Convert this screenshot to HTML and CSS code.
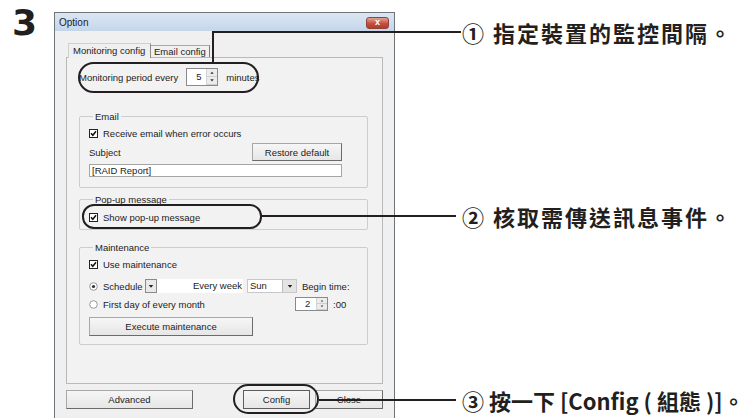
FILE: index.html
```html
<!DOCTYPE html>
<html lang="zh-Hant">

<head>
    <meta charset="UTF-8">
    <meta name="viewport" content="width=device-width, initial-scale=1.0">
    <title>Option</title>

    <link rel="stylesheet" href="styles.css">
</head>

<body>
    <div class="page">
        <div class="step">3</div>

        <div class="dialog">
            <div class="titlebar">
                <span>Option</span>
                <span class="close">x</span>
            </div>

            <div class="client">
                <div class="tabs">
                    <span class="tab active">Monitoring config</span>
                    <span class="tab">Email config</span>
                </div>

                <div class="panel">
                    <div class="row period">
                        <span>Monitoring period every</span>
                        <span class="spin">
                            <span class="val">5</span>
                            <span class="arrows">
                                <svg viewBox="0 0 11 8"><path d="M3.5 5.5h4L5.5 3z" fill="#333"/></svg>
                                <svg viewBox="0 0 11 8"><path d="M3.5 2.5h4L5.5 5z" fill="#333"/></svg>
                            </span>
                        </span>
                        <span>minutes</span>
                    </div>

                    <fieldset class="group email">
                        <legend>Email</legend>
                        <div class="row check">
                            <svg class="box" viewBox="0 0 9 9"><rect x=".5" y=".5" width="8" height="8" fill="#fff" stroke="#222"/><path d="M2 4.3l1.8 2L7 2.3" fill="none" stroke="#111" stroke-width="1.5"/></svg>
                            <span>Receive email when error occurs</span>
                        </div>
                        <div class="row subject">
                            <span>Subject</span>
                            <span class="btn restore">Restore default</span>
                        </div>
                        <div class="textbox">[RAID Report]</div>
                    </fieldset>

                    <fieldset class="group popup">
                        <legend>Pop-up message</legend>
                        <div class="row check">
                            <svg class="box" viewBox="0 0 9 9"><rect x=".5" y=".5" width="8" height="8" fill="#fff" stroke="#222"/><path d="M2 4.3l1.8 2L7 2.3" fill="none" stroke="#111" stroke-width="1.5"/></svg>
                            <span>Show pop-up message</span>
                        </div>
                    </fieldset>

                    <fieldset class="group maint">
                        <legend>Maintenance</legend>
                        <div class="row check">
                            <svg class="box" viewBox="0 0 9 9"><rect x=".5" y=".5" width="8" height="8" fill="#fff" stroke="#222"/><path d="M2 4.3l1.8 2L7 2.3" fill="none" stroke="#111" stroke-width="1.5"/></svg>
                            <span>Use maintenance</span>
                        </div>
                        <div class="row schedule">
                            <svg class="radio" viewBox="0 0 9 9"><circle cx="4.5" cy="4.5" r="3.8" fill="#fff" stroke="#999"/><circle cx="4.5" cy="4.5" r="1.6" fill="#333"/></svg>
                            <span class="lbl-schedule">Schedule</span>
                            <span class="drop">
                                <svg viewBox="0 0 9 9"><path d="M2.5 3.5h4L4.5 6z" fill="#222"/></svg>
                            </span>
                            <span class="every">Every week</span>
                            <span class="combo">
                                <span class="combo-val">Sun</span>
                                <span class="combo-btn"><svg viewBox="0 0 9 9"><path d="M2.5 3.5h4L4.5 6z" fill="#222"/></svg></span>
                            </span>
                            <span class="begin">Begin time:</span>
                        </div>
                        <div class="row month">
                            <svg class="radio" viewBox="0 0 9 9"><circle cx="4.5" cy="4.5" r="3.8" fill="#fff" stroke="#999"/></svg>
                            <span class="grow">First day of every month</span>
                            <span class="spin small">
                                <span class="val">2</span>
                                <span class="arrows">
                                    <svg viewBox="0 0 11 8"><path d="M3.5 5.5h4L5.5 3z" fill="#333"/></svg>
                                    <svg viewBox="0 0 11 8"><path d="M3.5 2.5h4L5.5 5z" fill="#333"/></svg>
                                </span>
                            </span>
                            <span class="mins">:00</span>
                        </div>
                        <span class="btn execute">Execute maintenance</span>
                    </fieldset>
                </div>

                <div class="buttons">
                    <span class="btn advanced">Advanced</span>
                    <div class="btn-group">
                        <span class="btn config">Config</span>
                        <span class="btn closebtn">Close</span>
                    </div>
                </div>
            </div>
        </div>

        <!-- callouts drawn over the screenshot -->
        <div class="oval oval-1"></div>
        <div class="wire wire-1v"></div>
        <div class="wire wire-1h"></div>
        <p class="note note-1">① 指定裝置的監控間隔。</p>

        <div class="oval oval-2"></div>
        <div class="wire wire-2"></div>
        <p class="note note-2">② 核取需傳送訊息事件。</p>

        <div class="oval oval-3"></div>
        <div class="wire wire-3"></div>
        <p class="note note-3">③ 按一下 [Config ( 組態 )]。</p>
    </div>
</body>

</html>
```

FILE: styles.css
```css
* {
    padding: 0;
    margin: 0;
    box-sizing: border-box;
}

body {
    background: #fff;
    font-family: "Liberation Sans", Arial, sans-serif;
    color: #1c1c1c;
    overflow: hidden;
}

.page {
    position: relative;
    width: 754px;
    height: 418px;
    display: flex;
    align-items: flex-start;
}

.step {
    width: 54px;
    padding: 2px 0 0 12px;
    font-family: "DejaVu Sans", sans-serif;
    font-weight: bold;
    font-size: 36px;
    line-height: 42px;
    color: #231f20;
}

/* ---------- dialog ---------- */

.dialog {
    margin-top: 12px;
    width: 341px;
    height: 420px;
    border: 1px solid #6f7478;
    background: #f0f0f0;
    font-size: 9.5px;
    white-space: nowrap;
}

.titlebar {
    height: 18px;
    display: flex;
    justify-content: space-between;
    align-items: center;
    padding: 0 5px 0 4px;
    background: linear-gradient(#dbe6f3, #c5d6ea);
    font-size: 10px;
}

.close {
    width: 23px;
    height: 12px;
    margin-top: 2px;
    border: 1px solid #8c4338;
    border-radius: 3px;
    background: linear-gradient(#e1a496, #c4503f 55%, #b9382a);
    color: #fff;
    font-weight: bold;
    font-size: 9px;
    line-height: 9px;
    text-align: center;
}

.client {
    padding: 12px 11px 0 11px;
}

.tabs {
    display: flex;
    align-items: flex-end;
    padding-left: 2px;
    height: 14px;
}

.tab {
    height: 12px;
    padding: 0 3px;
    border: 1px solid #a9a9a9;
    border-bottom: none;
    line-height: 11px;
    background: #f0f0f0;
}

.tab.active {
    height: 15px;
    width: 83px;
    margin-bottom: -1px;
    padding-left: 4px;
    border-color: #d0d0d0 #8d8d8d #d0d0d0 #d0d0d0;
    line-height: 13px;
    position: relative;
}

.tab+.tab {
    border-left: none;
    border-right-color: #7c7c7c;
}

.panel {
    height: 327px;
    border: 1px solid #b9b9b9;
    background: #f2f2f2;
    padding: 0 14px 0 12px;
}

.row {
    display: flex;
    align-items: center;
}

.row>* {
    flex-shrink: 0;
}

.period {
    margin-top: 10px;
    height: 18px;
    gap: 8px;
}

.spin {
    display: flex;
    width: 32px;
    height: 18px;
    border: 1px solid #8a8a8a;
    background: #fff;
}

.spin .val {
    flex: 1;
    padding-left: 9px;
    line-height: 16px;
}

.arrows {
    width: 11px;
    display: flex;
    flex-direction: column;
    border-left: 1px solid #d4d4d4;
    background: #ececec;
}

.arrows svg {
    flex: 1;
    width: 10px;
    border-bottom: 1px solid #cfcfcf;
}

/* ---------- group boxes ---------- */

.group {
    min-width: 0;
    border: 1px solid #cdcdcd;
    border-radius: 2px;
    padding: 0 25px 0 9px;
}

.group legend {
    margin-left: 4px;
    padding: 0 2px;
    line-height: 11px;
}

.check {
    height: 12px;
    gap: 5px;
}

.box,
.radio {
    width: 9px;
    height: 9px;
}

.email {
    margin-top: 25px;
    padding-top: 5px;
    padding-bottom: 10px;
}

.subject {
    margin-top: 4px;
    height: 18px;
    justify-content: space-between;
}

.btn {
    display: flex;
    align-items: center;
    justify-content: center;
    border: 1px solid #a7a7a7;
    border-right-color: #6b6b6b;
    border-bottom-color: #6b6b6b;
    background: linear-gradient(#f6f6f6, #e6e6e6);
}

.restore {
    width: 90px;
    height: 18px;
}

.textbox {
    margin-top: 3px;
    height: 13px;
    border: 1px solid #a5a5a5;
    background: #fff;
    padding-left: 2px;
    line-height: 11px;
}

.popup {
    margin-top: 6px;
    padding-top: 6px;
    padding-bottom: 6px;
}

.maint {
    margin-top: 12px;
    padding-top: 5px;
    padding-bottom: 8px;
}

.schedule {
    margin-top: 9px;
    height: 14px;
}

.lbl-schedule {
    margin-left: 5px;
    width: 42px;
}

.drop {
    width: 12px;
    height: 14px;
    border: 1px solid #8a8a8a;
    background: #e9e9e9;
    display: flex;
    align-items: center;
}

.drop svg,
.combo-btn svg {
    width: 10px;
    height: 10px;
}

.every {
    width: 86px;
    height: 14px;
    background: #fff;
    text-align: right;
    line-height: 14px;
    padding-right: 1px;
}

.combo {
    margin-left: 4px;
    width: 50px;
    height: 14px;
    display: flex;
    background: #fff;
    border: 1px solid #c8c8c8;
}

.combo-val {
    flex: 1;
    padding-left: 2px;
    line-height: 12px;
}

.combo-btn {
    width: 14px;
    display: flex;
    align-items: center;
    justify-content: center;
    background: #e4e4e4;
    border-left: 1px solid #bcbcbc;
}

.begin {
    margin-left: 5px;
}

.month {
    margin-top: 4px;
    height: 14px;
}

.month .grow {
    width: 192px;
    margin-left: 5px;
}

.spin.small {
    width: 33px;
    height: 14px;
}

.spin.small .val {
    line-height: 12px;
}

.mins {
    margin-left: 5px;
}

.execute {
    margin-top: 6px;
    width: 164px;
    height: 19px;
}

/* ---------- bottom buttons ---------- */

.buttons {
    margin-top: 6px;
    display: flex;
    justify-content: space-between;
}

.btn-group {
    display: flex;
    gap: 5px;
}

.advanced {
    width: 127px;
    height: 19px;
}

.config {
    width: 67px;
    height: 19px;
    border-color: #5c5c5c;
}

.closebtn {
    width: 68px;
    height: 19px;
}

/* ---------- callouts ---------- */

.oval {
    position: absolute;
    border: 2px solid #231f20;
    border-radius: 16px;
}

.oval-1 {
    left: 78px;
    top: 62px;
    width: 181px;
    height: 31px;
}

.oval-2 {
    left: 82px;
    top: 204px;
    width: 180px;
    height: 25px;
    border-radius: 12px;
}

.oval-3 {
    left: 233px;
    top: 384px;
    width: 86px;
    height: 30px;
    border-radius: 15px;
}

.wire {
    position: absolute;
    background: #231f20;
}

.wire-1v {
    left: 212px;
    top: 31px;
    width: 2px;
    height: 31px;
}

.wire-1h {
    left: 212px;
    top: 31px;
    width: 249px;
    height: 2px;
}

.wire-2 {
    left: 262px;
    top: 215px;
    width: 194px;
    height: 2px;
}

.wire-3 {
    left: 319px;
    top: 399px;
    width: 137px;
    height: 2px;
}

.note {
    position: absolute;
    left: 462px;
    font-family: "Noto Sans CJK TC", "Noto Sans", sans-serif;
    font-weight: 700;
    font-size: 22px;
    line-height: 24px;
    letter-spacing: 2px;
    color: #231f20;
    white-space: nowrap;
}

.note-1 {
    top: 20px;
}

.note-2 {
    top: 204px;
}

.note-3 {
    top: 388px;
    letter-spacing: 0;
}
```
